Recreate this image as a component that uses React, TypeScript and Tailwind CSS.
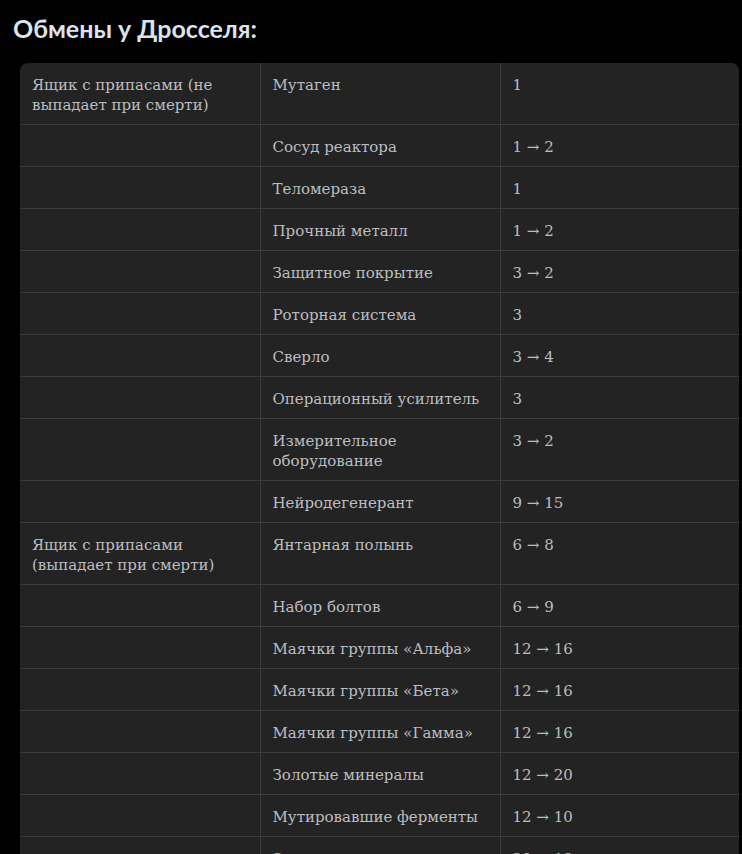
const rows: [string, string, string][] = [
  ['Ящик с припасами (не выпадает при смерти)', 'Мутаген', '1'],
  ['', 'Сосуд реактора', '1 → 2'],
  ['', 'Теломераза', '1'],
  ['', 'Прочный металл', '1 → 2'],
  ['', 'Защитное покрытие', '3 → 2'],
  ['', 'Роторная система', '3'],
  ['', 'Сверло', '3 → 4'],
  ['', 'Операционный усилитель', '3'],
  ['', 'Измерительное оборудование', '3 → 2'],
  ['', 'Нейродегенерант', '9 → 15'],
  ['Ящик с припасами (выпадает при смерти)', 'Янтарная полынь', '6 → 8'],
  ['', 'Набор болтов', '6 → 9'],
  ['', 'Маячки группы «Альфа»', '12 → 16'],
  ['', 'Маячки группы «Бета»', '12 → 16'],
  ['', 'Маячки группы «Гамма»', '12 → 16'],
  ['', 'Золотые минералы', '12 → 20'],
  ['', 'Мутировавшие ферменты', '12 → 10'],
  ['', 'Экзотические материалы', '20 → 18'],
];

export default function App() {
  return (
    <div className="min-h-screen bg-black pt-[13px] pb-10">
      <h2 className="px-[13px] text-[25px] font-bold leading-[30px] text-[#dde3ea] font-['Lato',sans-serif]">
        Обмены у Дросселя:
      </h2>
      <div className="ml-[20px] mt-[20px] w-[719px] overflow-hidden rounded-lg bg-[#232323]">
        <table className="w-full table-fixed border-collapse font-['DejaVu_Serif',serif] text-[15px] leading-[20px] text-[#bbbdc0]">
          <tbody>
            {rows.map((r, i) => (
              <tr key={i} className={i > 0 ? 'border-t border-[#3b3b3b]' : ''}>
                <td className="w-[240px] px-[12px] pt-[12px] pb-[9px] align-top">{r[0]}</td>
                <td className="w-[240px] border-l border-[#3b3b3b] px-[12px] pt-[12px] pb-[9px] align-top">{r[1]}</td>
                <td className="border-l border-[#3b3b3b] px-[12px] pt-[12px] pb-[9px] align-top">{r[2]}</td>
              </tr>
            ))}
          </tbody>
        </table>
      </div>
    </div>
  );
}
